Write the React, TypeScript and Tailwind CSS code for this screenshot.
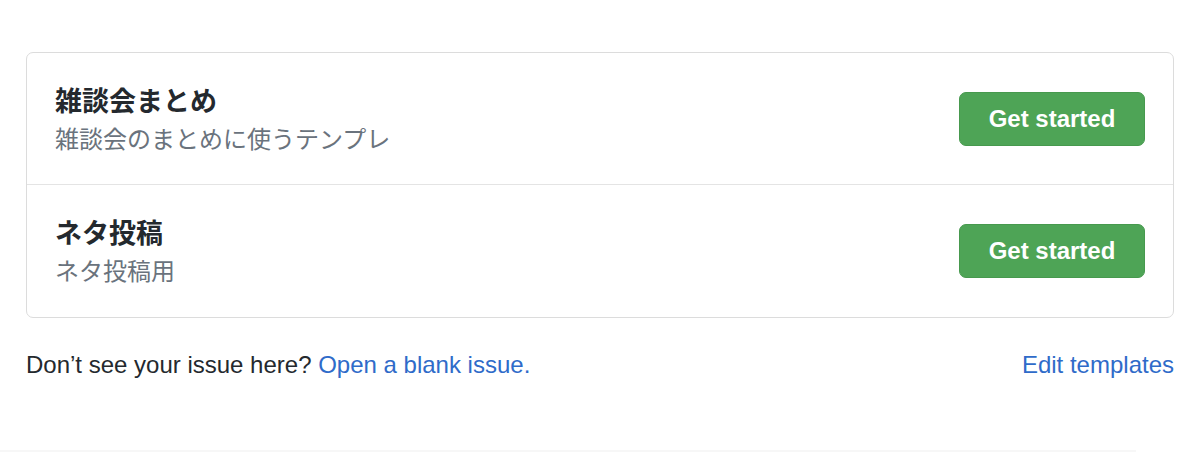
const templates = [
  { title: "雑談会まとめ", about: "雑談会のまとめに使うテンプレ" },
  { title: "ネタ投稿", about: "ネタ投稿用" },
];

const App = () => {
  return (
    <div className="w-[1200px] h-[475px] bg-white font-['Liberation_Sans','Noto_Sans_CJK_JP',sans-serif]">
      <div className="px-[26px] pt-[52px]">
        <div className="border border-[#dcdcdc] rounded-[7px]">
          {templates.map((t, i) => (
            <div
              key={t.title}
              className={`flex items-center justify-between pl-[28px] pr-[28px] ${i > 0 ? "h-[133px] border-t border-[#e4e4e4]" : "h-[131px]"}`}
            >
              <div className="pt-[2px]">
                <div className="text-[27px] leading-[36px] font-bold text-[#24292e] font-['Noto_Sans_CJK_JP',sans-serif]">
                  {t.title}
                </div>
                <div className="text-[24px] leading-[40px] text-[#6a737d] font-['Noto_Sans_CJK_JP',sans-serif]">
                  {t.about}
                </div>
              </div>
              <button className="w-[186px] h-[54px] rounded-[7px] bg-[#4ea456] border border-[#47994e] text-white text-[24px] font-bold">
                Get started
              </button>
            </div>
          ))}
        </div>
        <div className="flex justify-between items-center mt-[31px] text-[24px] leading-[32px]">
          <p className="text-[#24292e]">
            Don’t see your issue here?{" "}
            <a className="text-[#2f6bc9]">Open a blank issue.</a>
          </p>
          <a className="text-[#2f6bc9]">Edit templates</a>
        </div>
      </div>
      <div className="mt-[69px] w-[1136px] border-t-2 border-[#f7f7f7]" />
    </div>
  );
};

export default App;
